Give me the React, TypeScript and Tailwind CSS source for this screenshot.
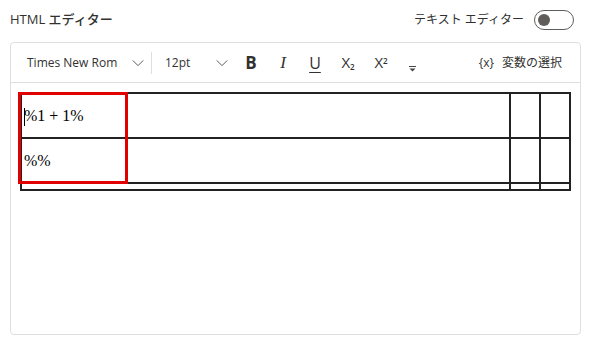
import React from "react";

const Chevron = () => (
  <svg width="14" height="14" viewBox="0 0 16 16" fill="none" stroke="#555" strokeWidth="1.1">
    <path d="M2 5 L8 11 L14 5" />
  </svg>
);

export default function App() {
  const ui = { fontFamily: '"Segoe UI", "Open Sans", "Noto Sans CJK JP", sans-serif' };
  return (
    <div className="w-[591px] h-[345px] bg-white relative overflow-hidden" style={ui}>
      <div className="flex items-center justify-between pl-[10px] pr-[17px] h-[42px]">
        <div className="text-[13px] font-medium text-[#323130] -mt-[2px]">HTML エディター</div>
        <div className="flex items-center gap-[10px] -mt-[2px]">
          <span className="text-[12px] text-[#323130]">テキスト エディター</span>
          <div className="w-[40px] h-[20px] rounded-full border border-[#605e5c] flex items-center px-[3px]">
            <div className="w-[12px] h-[12px] rounded-full bg-[#605e5c]" />
          </div>
        </div>
      </div>
      <div className="mx-[10px] h-[293px] border border-[#e1dfdd] rounded-[4px] flex flex-col">
        <div className="h-[40px] border-b border-[#e1dfdd] flex items-center text-[#323130] relative">
          <div className="flex items-center w-[140px] pl-[16px] pr-[6px] justify-between">
            <span className="text-[12px]">Times New Rom</span>
            <Chevron />
          </div>
          <div className="w-px h-[22px] bg-[#e1dfdd]" />
          <div className="flex items-center w-[83px] pl-[13px] pr-[6px] justify-between">
            <span className="text-[12px]">12pt</span>
            <Chevron />
          </div>
          <div className="w-[32px] text-center text-[17px] font-bold" style={{ fontFamily: '"Open Sans", sans-serif' }}>B</div>
          <div className="w-[32px] text-center text-[17px] italic font-light" style={{ fontFamily: '"Liberation Serif", serif' }}>I</div>
          <div className="w-[32px] text-center text-[16px] underline underline-offset-[3px]">U</div>
          <div className="w-[34px] text-center text-[15px]">X<sub className="text-[8px] font-semibold">2</sub></div>
          <div className="w-[32px] text-center text-[15px]">X<sup className="text-[8px] font-semibold">2</sup></div>
          <div className="w-[30px] flex justify-center pt-[12px]">
            <svg width="7" height="6" viewBox="0 0 7 6"><rect x="0" y="0" width="7" height="1" fill="#444" /><path d="M0.5 2.5 L6.5 2.5 L3.5 5.5 Z" fill="#444" /></svg>
          </div>
          <div className="ml-auto pr-[18px] flex items-center gap-[8px] text-[12px]">
            <span>{"{x}"}</span>
            <span>変数の選択</span>
          </div>
        </div>
        <div className="relative pl-[9px] pr-[8px] pt-[9px]" style={{ fontFamily: '"Liberation Serif", serif' }}>
          <table className="border-collapse w-[551px] border-2 border-[#222]">
            <tbody>
              <tr className="h-[45px]">
                <td className="border-2 border-[#222] w-[489px] px-[2px] text-[16px] relative">
                  <span className="absolute left-[2px] top-[14px] w-px h-[18px] bg-black" />
                  %1 + 1%
                </td>
                <td className="border-2 border-[#222] w-[30px]" />
                <td className="border-2 border-[#222]" />
              </tr>
              <tr className="h-[45px]">
                <td className="border-2 border-[#222] px-[2px] text-[16px]">%%</td>
                <td className="border-2 border-[#222]" />
                <td className="border-2 border-[#222]" />
              </tr>
              <tr className="h-[7px]">
                <td className="border-2 border-[#222]" />
                <td className="border-2 border-[#222]" />
                <td className="border-2 border-[#222]" />
              </tr>
            </tbody>
          </table>
          <div className="absolute left-[7px] top-[9px] w-[110px] h-[92px] border-[3px] border-[#e00000]" />
        </div>
      </div>
    </div>
  );
}
